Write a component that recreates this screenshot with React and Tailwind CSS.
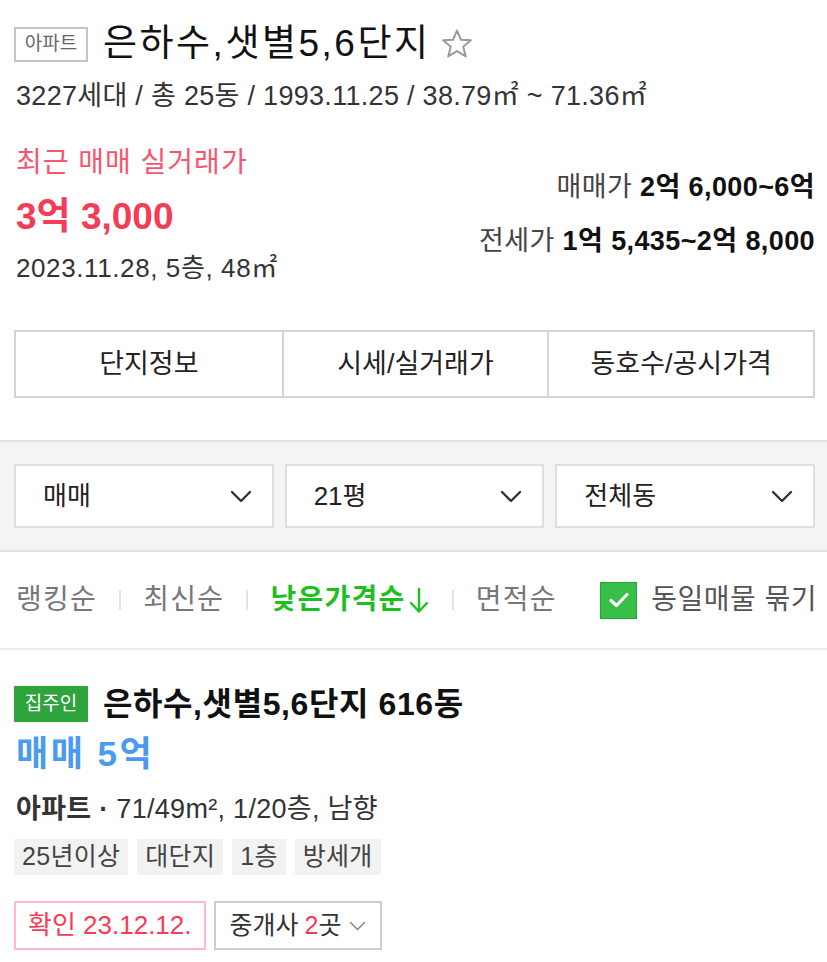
import React from "react";

const FONT = { fontFamily: '"Liberation Sans", "Noto Sans CJK KR", sans-serif' };

function Chevron({ className = "", color = "#333", w = 22, h = 13, sw = 2.4 }) {
  return (
    <svg width={w} height={h} viewBox="0 0 22 13" className={className} fill="none">
      <polyline points="2,2 11,11 20,2" stroke={color} strokeWidth={sw} strokeLinecap="round" strokeLinejoin="round" />
    </svg>
  );
}

function Star() {
  return (
    <svg width="34" height="34" viewBox="0 0 24 24" fill="none">
      <polygon
        points="12,2.5 14.8,9 21.8,9.4 16.4,13.9 18.2,20.8 12,17 5.8,20.8 7.6,13.9 2.2,9.4 9.2,9"
        stroke="#9a9a9a"
        strokeWidth="1.4"
        strokeLinejoin="round"
      />
    </svg>
  );
}

function Select({ label }) {
  return (
    <div className="h-[64px] bg-white border-2 border-[#dedede] flex items-center justify-between pl-[27px] pr-[20px]">
      <span className="text-[26px] text-[#222]">{label}</span>
      <Chevron />
    </div>
  );
}

function Sep() {
  return <span className="w-[2px] h-[20px] bg-[#e4e4e4] mx-[22px]" />;
}

export default function App() {
  return (
    <div className="w-[827px] h-[962px] bg-white overflow-hidden text-[#222]" style={FONT}>
      {/* Header */}
      <div className="pl-[14px] pr-[12px]">
        <div className="pt-[20px] h-[68px] flex items-center">
          <span className="h-[35px] w-[74px] border-2 border-[#c4c4c4] flex items-center justify-center text-[19px] text-[#666]">
            아파트
          </span>
          <span className="ml-[15px] text-[37px] tracking-[2.5px] leading-[48px] text-[#111]">은하수,샛별5,6단지</span>
          <span className="ml-[9px] flex items-center">
            <Star />
          </span>
        </div>
        <div className="mt-[12px] h-[32px] leading-[32px] text-[27px] tracking-[0.3px] text-[#333] pl-[2px] whitespace-nowrap">
          3227세대 / 총 25동 / 1993.11.25 / 38.79㎡ ~ 71.36㎡
        </div>

        <div className="mt-[34px] flex justify-between">
          <div className="pl-[2px]">
            <div className="h-[34px] leading-[34px] text-[28px] tracking-[1px] text-[#f5566e]">최근 매매 실거래가</div>
            <div className="mt-[17px] h-[40px] leading-[40px] text-[37px] font-bold text-[#f43c57]">3억 3,000</div>
            <div className="mt-[15px] h-[32px] leading-[32px] text-[26px] tracking-[0.6px] text-[#333]">2023.11.28, 5층, 48㎡</div>
          </div>
          <div className="pt-[23px] text-right">
            <div className="h-[36px] leading-[36px] text-[27px] tracking-[0.4px] text-[#444]">
              매매가 <span className="font-bold text-[#111]">2억 6,000~6억</span>
            </div>
            <div className="mt-[18px] h-[36px] leading-[36px] text-[27px] tracking-[0.4px] text-[#444]">
              전세가 <span className="font-bold text-[#111]">1억 5,435~2억 8,000</span>
            </div>
          </div>
        </div>

        <div className="mt-[46px] h-[68px] border-2 border-[#d4d4d4] grid grid-cols-3">
          <div className="flex items-center justify-center text-[27px] text-[#222]">단지정보</div>
          <div className="flex items-center justify-center text-[27px] text-[#222] border-l-2 border-[#d4d4d4]">시세/실거래가</div>
          <div className="flex items-center justify-center text-[27px] text-[#222] border-l-2 border-[#d4d4d4]">동호수/공시가격</div>
        </div>
      </div>

      {/* Filter band */}
      <div className="mt-[42px] bg-[#f4f4f4] border-t-2 border-b-2 border-[#e2e2e2] pt-[22px] pb-[22px] pl-[14px] pr-[12px] grid grid-cols-3 gap-[11px]">
        <Select label="매매" />
        <Select label="21평" />
        <Select label="전체동" />
      </div>

      {/* Sort row */}
      <div className="h-[98px] border-b-2 border-[#ececec] flex items-center pl-[16px] pr-[10px] text-[28px] tracking-[1.3px]">
        <span className="text-[#777]">랭킹순</span>
        <Sep />
        <span className="text-[#777]">최신순</span>
        <Sep />
        <span className="text-[#1fbf1f] font-bold flex items-center">
          낮은가격순
          <svg width="22" height="28" viewBox="0 0 22 28" fill="none" className="ml-[2px]">
            <line x1="11" y1="3" x2="11" y2="25" stroke="#1fbf1f" strokeWidth="2.4" strokeLinecap="round" />
            <polyline points="3,17 11,25.5 19,17" stroke="#1fbf1f" strokeWidth="2.4" strokeLinecap="round" strokeLinejoin="round" />
          </svg>
        </span>
        <Sep />
        <span className="text-[#777]">면적순</span>
        <span className="ml-auto flex items-center tracking-[0.5px]">
          <span className="w-[37px] h-[37px] bg-[#38bf48] border border-[#2a9f38] flex items-center justify-center">
            <svg width="22" height="18" viewBox="0 0 22 18" fill="none">
              <polyline points="3,9.5 8.5,14.5 19,3.5" stroke="white" strokeWidth="3.2" strokeLinecap="round" strokeLinejoin="round" />
            </svg>
          </span>
          <span className="ml-[14px] text-[#555]">동일매물 묶기</span>
        </span>
      </div>

      {/* Listing */}
      <div className="pl-[14px] pr-[12px] pt-[36px]">
        <div className="h-[36px] flex items-center">
          <span className="h-[36px] w-[74px] bg-[#2ea53c] text-white text-[19px] flex items-center justify-center">집주인</span>
          <span className="ml-[15px] text-[32px] tracking-[0.6px] font-bold text-[#111] whitespace-nowrap">은하수,샛별5,6단지 616동</span>
        </div>
        <div className="mt-[12px] h-[40px] leading-[40px] text-[35px] tracking-[2.5px] font-bold text-[#4a9bf0] pl-[2px]">매매 5억</div>
        <div className="mt-[20px] h-[30px] leading-[30px] text-[27px] tracking-[0.3px] text-[#333] pl-[2px] whitespace-nowrap">
          <span className="font-bold">아파트 · </span>71/49m², 1/20층, 남향
        </div>
        <div className="mt-[15px] flex gap-[9px]">
          {["25년이상", "대단지", "1층", "방세개"].map((t) => (
            <span key={t} className="h-[36px] px-[8px] bg-[#f2f2f2] text-[25px] tracking-[0.3px] text-[#444] flex items-center">
              {t}
            </span>
          ))}
        </div>
        <div className="mt-[26px] flex gap-[8px]">
          <span className="h-[49px] px-[12px] border-2 border-[#ffbac3] text-[#f43c57] text-[26px] flex items-center">
            확인 23.12.12.
          </span>
          <span className="h-[49px] pl-[14px] pr-[14px] border-2 border-[#cccccc] text-[25px] text-[#333] flex items-center">
            중개사 <span className="text-[#f43c57] ml-[6px]">2</span>곳
            <Chevron className="ml-[8px]" color="#888" w={17} h={10} sw={2} />
          </span>
        </div>
      </div>
    </div>
  );
}
